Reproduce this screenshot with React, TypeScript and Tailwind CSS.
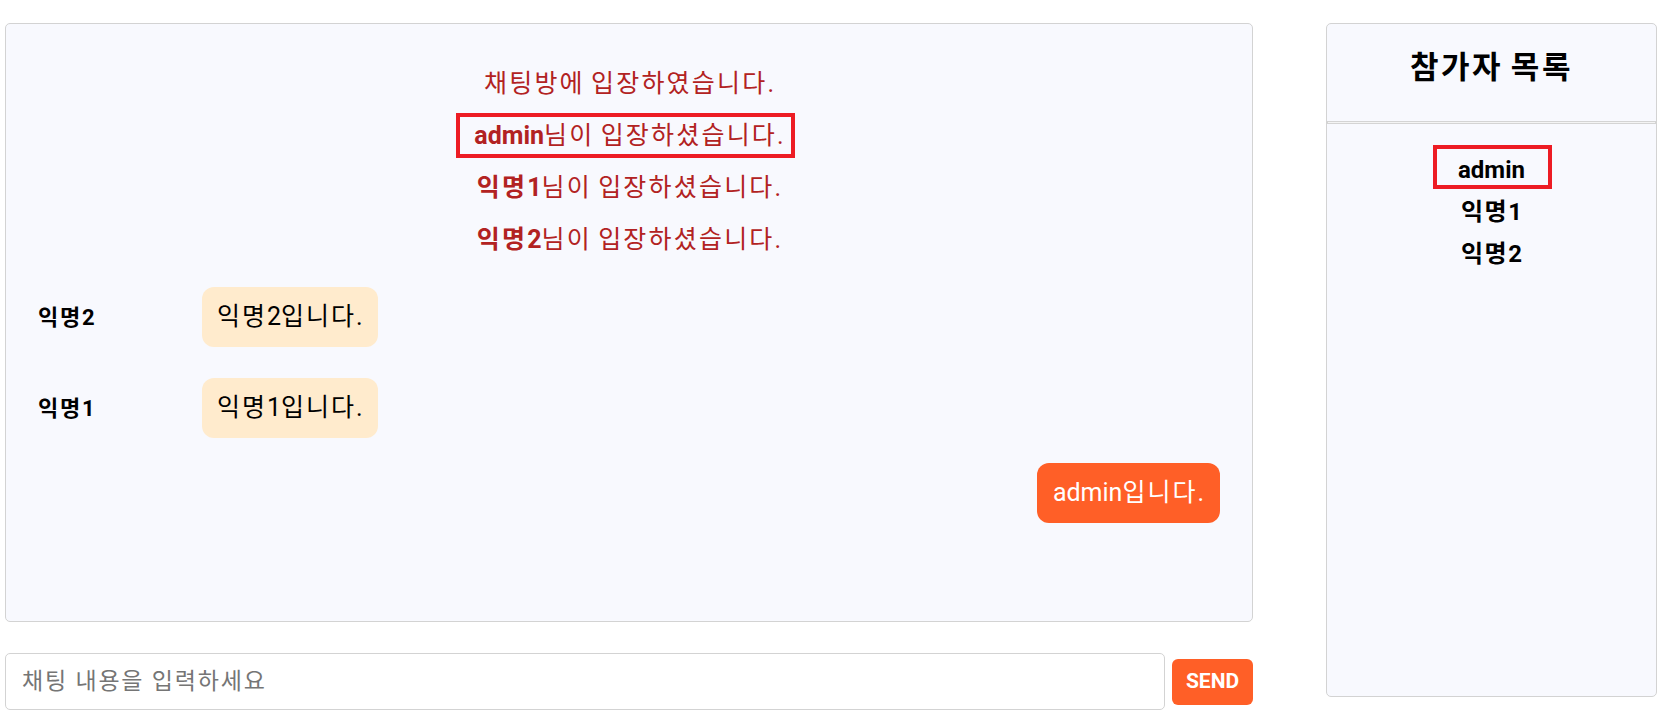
import React from 'react';

const FONT = "font-['Roboto','Noto_Sans_CJK_KR',sans-serif]";

// hangul in the reference runs at 1em per glyph, a bit wider than Noto CJK
function Ko({ text, track = 'tracking-[2.2px]' }: { text: string; track?: string }) {
  const parts = text.split(/([가-힣]+)/);
  return (
    <span className="whitespace-pre">
      {parts.map((p, i) =>
        /[가-힣]/.test(p) ? <span key={i} className={track}>{p}</span> : <React.Fragment key={i}>{p}</React.Fragment>
      )}
    </span>
  );
}

const systemLines = [
  { name: '', text: '채팅방에 입장하였습니다.' },
  { name: 'admin', text: '님이 입장하셨습니다.', marked: true },
  { name: '익명1', text: '님이 입장하셨습니다.' },
  { name: '익명2', text: '님이 입장하셨습니다.' },
];

function Mark({ className }: { className: string }) {
  return <span className={`pointer-events-none absolute border-4 border-[#ed1c24] ${className}`} />;
}

function Other({ name, text, mt }: { name: string; text: string; mt: string }) {
  return (
    <div className={`${mt} flex items-center`}>
      <div className="w-[164px] text-[22px] font-bold text-black"><Ko text={name} track="tracking-[1.8px]" /></div>
      <div className="flex h-[60px] items-center rounded-[12px] bg-[#ffebcd] px-[15px] text-[25px] text-black">
        <Ko text={text} track="tracking-[2px]" />
      </div>
    </div>
  );
}

export default function App() {
  return (
    <div className={`${FONT} flex h-[716px] w-[1664px] bg-white pl-[5px] pt-[23px]`}>
      <div className="flex w-[1248px] flex-col">
        <div className="h-[599px] rounded-[5px] border border-[#d3d3d3] bg-[#f8f9fe] px-[32px] pt-[34px]">
          {systemLines.map((l, i) => (
            <div key={i} className="flex h-[52px] items-center justify-center text-[25px] text-[#b22222]">
              <span className="relative flex h-full items-center">
                <span className="whitespace-pre">
                  {l.name && <b className="font-bold"><Ko text={l.name} /></b>}
                  <Ko text={l.text} />
                </span>
                {l.marked && <Mark className="-left-[18px] -right-[11px] top-[3px] bottom-[4px]" />}
              </span>
            </div>
          ))}

          <Other name="익명2" text="익명2입니다." mt="mt-[21px]" />
          <Other name="익명1" text="익명1입니다." mt="mt-[31px]" />
          <div className="mt-[25px] flex justify-end">
            <div className="flex h-[60px] items-center rounded-[12px] bg-[#ff5f27] px-[16px] text-[25px] text-white">
              <Ko text="admin입니다." track="tracking-[2px]" />
            </div>
          </div>
        </div>

        <div className="mt-[31px] flex items-center gap-[7px]">
          <input
            className="h-[57px] flex-1 rounded-[5px] border border-[#d3d3d3] bg-white px-[16px] text-[23px] tracking-[1.8px] outline-none placeholder:text-[#757575]"
            placeholder="채팅 내용을 입력하세요"
          />
          <button className="h-[46px] w-[81px] rounded-[6px] bg-[#ff5f27] text-[21px] font-bold text-white">SEND</button>
        </div>
      </div>

      <div className="ml-[73px] flex h-[674px] w-[331px] flex-col rounded-[5px] border border-[#d3d3d3] bg-[#f8f9fe]">
        <div className="flex h-[97px] items-center justify-center pb-[8px] text-[31px] font-bold text-black">
          <Ko text="참가자 목록" track="tracking-[2.5px]" />
        </div>
        <div className="h-[3px] border border-[#d4d4d4] bg-[#f4f4f4]" />
        <div className="flex flex-col items-center pt-[25px] text-[24px] font-bold text-black">
          <div className="relative flex h-[42px] items-center">
            admin
            <Mark className="-left-[25px] -right-[27px] -top-[4px] bottom-[2px]" />
          </div>
          <div className="flex h-[42px] items-center"><Ko text="익명1" track="tracking-[1.5px]" /></div>
          <div className="flex h-[42px] items-center"><Ko text="익명2" track="tracking-[1.5px]" /></div>
        </div>
      </div>
    </div>
  );
}
